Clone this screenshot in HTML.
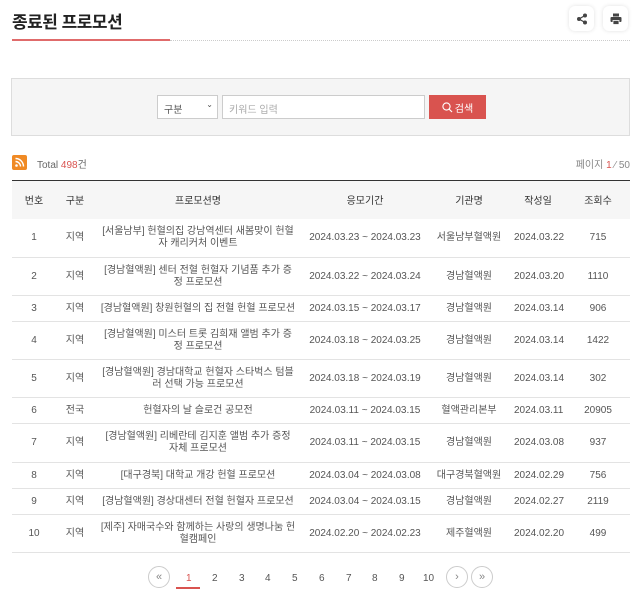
<!DOCTYPE html>
<html><head><meta charset="utf-8"><style>
*{margin:0;padding:0;box-sizing:border-box}
body{width:636px;height:600px;background:#fff;font-family:"Liberation Sans","Noto Sans CJK KR",sans-serif;color:#555;position:relative;overflow:hidden}
.abs{position:absolute}
h1{position:absolute;left:12px;top:8px;font-size:17px;font-weight:bold;color:#222;letter-spacing:-0.5px}
.line{position:absolute;left:12px;top:39px;width:158px;height:2px;background:#e06b6b}
.dots{position:absolute;left:170px;top:40px;width:460px;border-top:1px dotted #ccc}
.ib{position:absolute;top:6px;width:25px;height:25px;border-radius:6px;background:#fff;box-shadow:0 0 4px rgba(0,0,0,.12);display:flex;align-items:center;justify-content:center}
.sbox{position:absolute;left:11px;top:78px;width:619px;height:58px;border:1px solid #ddd;background:#f5f5f5}
.sel{position:absolute;left:157px;top:95px;width:61px;height:24px;border:1px solid #ccc;background:#fff;font-size:10px;padding:5px 6px;color:#555}
.inp{position:absolute;left:222px;top:95px;width:203px;height:24px;border:1px solid #ccc;background:#fff;font-size:10px;padding:5px 6px;color:#aaa}
.btn{position:absolute;left:429px;top:95px;width:57px;height:24px;background:#d9534f;color:#fff;font-size:10px;display:flex;align-items:center;justify-content:center;gap:2px}
table{position:absolute;left:12px;top:180px;width:618px;border-collapse:collapse;border-top:1.5px solid #333;font-size:10px;text-align:center;table-layout:fixed}
th{background:#f6f6f6;height:38px;font-weight:normal;color:#333}
td{border-bottom:1px solid #e3e3e3;line-height:12px;padding:0 4px;color:#555}
td.t{padding:0 6px}
.pg{position:absolute;top:566px;left:0;width:636px;font-size:10px;color:#555}
.pg span{position:absolute;top:7px}
.c{position:absolute;top:0;width:22px;height:22px;border:1px solid #ccc;border-radius:50%;text-align:center;line-height:20px;font-size:11px;color:#888}
</style></head><body>
<h1>종료된 프로모션</h1>
<div class="line"></div><div class="dots"></div>
<div class="ib" style="left:569px"><svg width="12" height="12" viewBox="0 0 12 12"><circle cx="9" cy="2.5" r="2" fill="#444"/><circle cx="3" cy="6" r="2" fill="#444"/><circle cx="9" cy="9.5" r="2" fill="#444"/><path d="M9 2.5L3 6L9 9.5" stroke="#444" stroke-width="1.2" fill="none"/></svg></div>
<div class="ib" style="left:603px"><svg width="12" height="12" viewBox="0 0 12 12"><rect x="3" y="0.5" width="6" height="3" fill="#444"/><rect x="0.5" y="4" width="11" height="5" rx="1" fill="#444"/><rect x="3" y="7.5" width="6" height="4" fill="#444" stroke="#fff" stroke-width=".8"/></svg></div>
<div class="sbox"></div>
<div class="sel">구분<span style="position:absolute;right:4px;top:4px;font-size:8px">⌄</span></div>
<div class="inp">키워드 입력</div>
<div class="btn"><svg width="11" height="11" viewBox="0 0 11 11"><circle cx="4.5" cy="4.5" r="3.6" stroke="#fff" stroke-width="1.1" fill="none"/><path d="M7 7L10 10" stroke="#fff" stroke-width="1.2"/></svg>검색</div>
<div class="abs" style="left:12px;top:155px;width:15px;height:15px;background:#f08a24;border-radius:2px"><svg width="15" height="15" viewBox="0 0 15 15"><circle cx="4.5" cy="10.5" r="1.3" fill="#fff"/><path d="M3.5 6.5a5 5 0 0 1 5 5M3.5 3.5a8 8 0 0 1 8 8" stroke="#fff" stroke-width="1.4" fill="none"/></svg></div>
<div class="abs" style="left:37px;top:156px;font-size:10px;color:#666">Total <span style="color:#d9534f">498</span>건</div>
<div class="abs" style="right:6px;top:156px;font-size:10px;color:#888">페이지 <span style="color:#d9534f">1</span> ⁄ 50</div>
<table>
<colgroup><col style="width:44px"><col style="width:38px"><col style="width:208px"><col style="width:126px"><col style="width:82px"><col style="width:56px"><col style="width:64px"></colgroup>
<tr><th>번호</th><th>구분</th><th>프로모션명</th><th>응모기간</th><th>기관명</th><th>작성일</th><th>조회수</th></tr>
<tr style="height:39px"><td>1</td><td>지역</td><td class="t">[서울남부] 헌혈의집 강남역센터 새봄맞이 헌혈자 캐리커처 이벤트</td><td>2024.03.23 ~ 2024.03.23</td><td>서울남부혈액원</td><td>2024.03.22</td><td>715</td></tr>
<tr style="height:38px"><td>2</td><td>지역</td><td class="t">[경남혈액원] 센터 전혈 헌혈자 기념품 추가 증정 프로모션</td><td>2024.03.22 ~ 2024.03.24</td><td>경남혈액원</td><td>2024.03.20</td><td>1110</td></tr>
<tr style="height:26px"><td>3</td><td>지역</td><td class="t">[경남혈액원] 창원헌혈의 집 전혈 헌혈 프로모션</td><td>2024.03.15 ~ 2024.03.17</td><td>경남혈액원</td><td>2024.03.14</td><td>906</td></tr>
<tr style="height:38px"><td>4</td><td>지역</td><td class="t">[경남혈액원] 미스터 트롯 김희재 앨범 추가 증정 프로모션</td><td>2024.03.18 ~ 2024.03.25</td><td>경남혈액원</td><td>2024.03.14</td><td>1422</td></tr>
<tr style="height:38px"><td>5</td><td>지역</td><td class="t">[경남혈액원] 경남대학교 헌혈자 스타벅스 텀블러 선택 가능 프로모션</td><td>2024.03.18 ~ 2024.03.19</td><td>경남혈액원</td><td>2024.03.14</td><td>302</td></tr>
<tr style="height:26px"><td>6</td><td>전국</td><td class="t">헌혈자의 날 슬로건 공모전</td><td>2024.03.11 ~ 2024.03.15</td><td>혈액관리본부</td><td>2024.03.11</td><td>20905</td></tr>
<tr style="height:39px"><td>7</td><td>지역</td><td class="t">[경남혈액원] 리베란테 김지훈 앨범 추가 증정 자체 프로모션</td><td>2024.03.11 ~ 2024.03.15</td><td>경남혈액원</td><td>2024.03.08</td><td>937</td></tr>
<tr style="height:26px"><td>8</td><td>지역</td><td class="t">[대구경북] 대학교 개강 헌혈 프로모션</td><td>2024.03.04 ~ 2024.03.08</td><td>대구경북혈액원</td><td>2024.02.29</td><td>756</td></tr>
<tr style="height:26px"><td>9</td><td>지역</td><td class="t">[경남혈액원] 경상대센터 전혈 헌혈자 프로모션</td><td>2024.03.04 ~ 2024.03.15</td><td>경남혈액원</td><td>2024.02.27</td><td>2119</td></tr>
<tr style="height:38px"><td>10</td><td>지역</td><td class="t">[제주] 자매국수와 함께하는 사랑의 생명나눔 헌혈캠페인</td><td>2024.02.20 ~ 2024.02.23</td><td>제주혈액원</td><td>2024.02.20</td><td>499</td></tr>
</table>
<div class="pg">
<div class="c" style="left:148px">«</div>
<span style="left:186px;color:#d9534f">1</span><div class="abs" style="left:176px;top:21px;width:24px;height:2px;background:#d9534f"></div>
<span style="left:212px">2</span><span style="left:239px">3</span><span style="left:265px">4</span><span style="left:292px">5</span><span style="left:319px">6</span><span style="left:346px">7</span><span style="left:372px">8</span><span style="left:399px">9</span><span style="left:423px">10</span>
<div class="c" style="left:446px">›</div>
<div class="c" style="left:471px">»</div>
</div>
</body></html>
